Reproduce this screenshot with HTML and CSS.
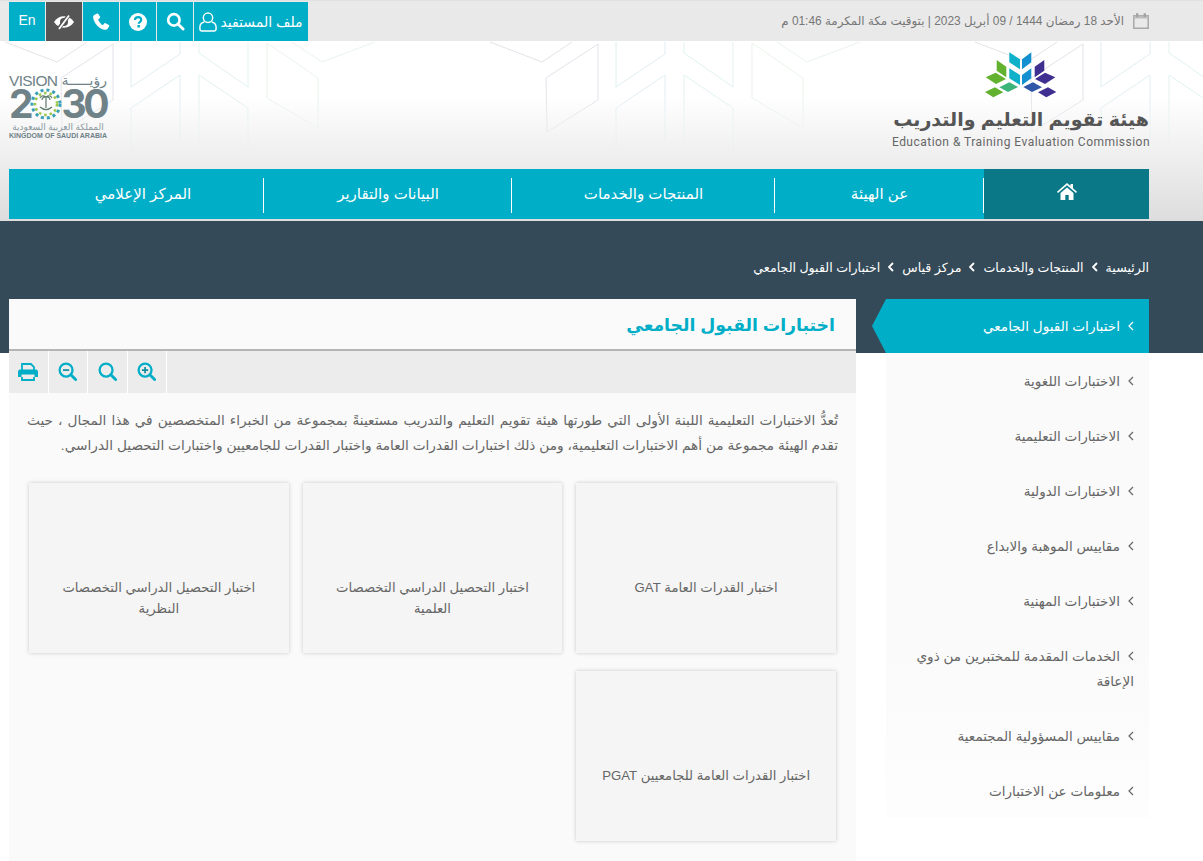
FILE: index.html
```html
<!DOCTYPE html>
<html lang="ar" dir="rtl">
  <head>
    <meta charset="UTF-8" />
    <meta name="viewport" content="width=device-width, initial-scale=1.0" />
    <title>اختبارات القبول الجامعي</title>
    <link rel="stylesheet" href="styles.css">
  </head>
  <body>
    <div class="topbar">
      <div class="date">
        <svg class="cal" viewBox="0 0 16 16" width="16" height="16">
          <path d="M.8 2.700h14.400v12.500H.8z" fill="none" stroke="#a9a9a9" stroke-width="1.500" />
          <path d="M.8 2.700h14.400v2.800H.8z" fill="#bcbcbc" />
          <path d="M3 .3h2.400v3.600H3zM10.600 .3H13v3.600h-2.400z" fill="#a3a3a3" />
        </svg>
        <span>الأحد 18 رمضان 1444 / 09 أبريل 2023 | بتوقيت مكة المكرمة 01:46 م</span>
      </div>
      <div class="tools">
        <a class="tool profile">
          <span>ملف المستفيد</span>
          <svg viewBox="0 0 20 22" width="18" height="20">
            <circle cx="10" cy="6.300" r="5.200" fill="none" stroke="#fff" stroke-width="1.600" />
            <path d="M6 11C2.500 11.500 1 13.500 1 17v1.500C1 20 2 21 3.500 21h13c1.500 0 2.500-1 2.500-2.500V17c0-3.500-1.500-5.500-5-6" fill="none" stroke="#fff" stroke-width="1.600" />
          </svg>
        </a>
        <a class="tool">
          <svg viewBox="0 0 20 20" width="19" height="19">
            <circle cx="8.300" cy="8.300" r="6" fill="none" stroke="#fff" stroke-width="2.800" />
            <path d="M12.800 12.800l5.200 5.200" stroke="#fff" stroke-width="3" stroke-linecap="round" />
          </svg>
        </a>
        <a class="tool">
          <svg viewBox="0 0 18 18" width="18" height="18">
            <circle cx="9" cy="9" r="9" fill="#fff" />
            <path d="M6 7c0-1.800 1.300-2.900 3.100-2.900S12.200 5.200 12.200 6.800c0 2.200-2.500 2.200-2.500 3.900" fill="none" stroke="#00aec7" stroke-width="2.200" />
            <path d="M8.400 12h2.500v2.500H8.400z" fill="#00aec7" />
          </svg>
        </a>
        <a class="tool">
          <svg viewBox="0 0 18 18" width="17" height="17">
            <path d="M4.300.600 1.300 2C.300 2.600 0 3.600.200 5c.800 5.800 6.200 11.700 11.800 12.700 1.700.300 2.900 0 3.500-1l1.600-2.600c.300-.500.200-1-.300-1.300l-3.500-2c-.500-.300-1-.200-1.300.200l-1.300 1.500c-.300.300-.600.400-1 .200C8.500 11.700 6.500 9.500 5.600 7.500c-.200-.400-.100-.700.200-1L7.200 5.300c.400-.300.500-.800.300-1.300L5.700 1C5.300.400 4.800.300 4.300.600z" fill="#fff" />
          </svg>
        </a>
        <a class="tool eye">
          <svg viewBox="0 0 22 16" width="22" height="16">
            <path d="M1 8c2.500-3.800 5.800-5.700 10-5.700S18.500 4.200 21 8c-2.500 3.800-5.800 5.700-10 5.700S3.500 11.800 1 8z" fill="#fff" />
            <circle cx="11" cy="8" r="4" fill="#555" />
            <path d="M5 15.500 16.500.500" stroke="#555" stroke-width="4" />
            <path d="M6 15 16 1.500" stroke="#fff" stroke-width="1.800" />
          </svg>
        </a>
        <a class="tool lang">En</a>
      </div>
    </div>

    <div class="head">
      <svg class="pattern" width="100%" height="128">
        <defs>
          <pattern id="tile" width="485" height="128" patternUnits="userSpaceOnUse">
            <g fill="none" stroke-width="1">
              <path d="M5 1 57 21 87 1M61 37 113 3V59L62 91Z" stroke="#e2e2e9" />
              <path d="M131 1V46L180 13V1M131 110V67L180 34V99" stroke="#e0eef2" />
              <path d="M199 1V12L248 46V1M199 100V34L248 67V110" stroke="#e1f1f1" />
              <path d="M267 2 318 37V87L267 57ZM292 1 322 21 375 1" stroke="#e9f3ea" />
            </g>
          </pattern>
        </defs>
        <rect width="100%" height="128" fill="url(#tile)" />
      </svg>

      <div class="brand-row">
        <div class="brand">
          <svg viewBox="986 52 72 46" width="72" height="46">
            <path d="M1010.300 52.300 1021 59.300V69.300L1010.300 62.300ZM1010.300 68.300 1021 75V85L1010.300 78.300Z" fill="#0fb1c9" />
            <path d="M1023 59.300 1032.300 52.300V62.300L1023 69.300ZM1023 75 1032.300 68.300V78.300L1023 85Z" fill="#1490d0" />
            <path d="M997.700 60 1007.300 66.700V77.300L997.700 70.700ZM986.700 77.300 996.700 72.700 1007 79 997 84ZM986 92 996 87.300 1004.300 92.300 994.300 97.300Z" fill="#62b22f" />
            <path d="M1000.300 87.300 1010.300 82.300 1019 87 1009 92Z" fill="#3cb47a" />
            <path d="M1024.300 87 1034 82.300 1043 87.300 1033 92Z" fill="#2f57a8" />
            <path d="M1035.700 66.700 1045.300 60V70.700L1035.700 77.300ZM1036 79 1046 72.700 1056.300 77.300 1046 84ZM1039 92.300 1049 87.300 1057.300 92 1047.300 97.300Z" fill="#3f2f90" />
          </svg>
          <div class="brand-ar">هيئة تقويم التعليم والتدريب</div>
          <div class="brand-en">Education &amp; Training Evaluation Commission</div>
        </div>

        <svg class="vision" viewBox="0 0 100 70" width="100" height="70">
          <text class="v-top" x="0" y="15" textLength="49">VISION</text>
          <text class="v-top-ar" x="98" y="14">رؤيـــــة</text>
          <text class="v-num" x="0" y="47">2</text>
          <text class="v-num" x="52.500" y="47" textLength="48">30</text>
          <circle cx="37" cy="33" r="14" fill="none" stroke="#3aa0b8" stroke-width="3" stroke-dasharray="3 3" />
          <circle cx="37" cy="33" r="11" fill="none" stroke="#9cc646" stroke-width="2.500" stroke-dasharray="2.500 3" />
          <path d="M37 26v11M37 26c-3-2-5-1-6 1M37 26c3-2 5-1 6 1M37 26c-2-.5-4 1-4 3M37 26c2-.5 4 1 4 3M31 36c4 3.500 8 3.500 12 0" fill="none" stroke="#5c7b6c" stroke-width="1.200" />
          <text class="v-ar" x="49" y="59">المملكة العربية السعودية</text>
          <text class="v-en" x="49" y="67" textLength="98">KINGDOM OF SAUDI ARABIA</text>
        </svg>
      </div>

      <nav class="nav">
        <a class="nav-item home">
          <svg viewBox="0 0 20 17" width="20" height="17">
            <path d="M10 0 13.500 3V1H16V5.200L20 8.700 19 10 10 2.300 1 10 0 8.700Z" fill="#fff" />
            <path d="M3.500 10 10 4.400 16.500 10V17H11.700V12H8.300V17H3.500Z" fill="#fff" />
          </svg>
        </a>
        <a class="nav-item about">عن الهيئة</a>
        <a class="nav-item products">المنتجات والخدمات</a>
        <a class="nav-item data">البيانات والتقارير</a>
        <a class="nav-item media">المركز الإعلامي</a>
      </nav>
    </div>

    <div class="band">
      <div class="crumbs">
        <a>الرئيسية</a>
        <svg class="crumb-sep" viewBox="0 0 6 10" width="6" height="10"><path d="M5 1 1 5l4 4" fill="none" stroke="#fff" stroke-width="1.800" /></svg>
        <a>المنتجات والخدمات</a>
        <svg class="crumb-sep" viewBox="0 0 6 10" width="6" height="10"><path d="M5 1 1 5l4 4" fill="none" stroke="#fff" stroke-width="1.800" /></svg>
        <a>مركز قياس</a>
        <svg class="crumb-sep" viewBox="0 0 6 10" width="6" height="10"><path d="M5 1 1 5l4 4" fill="none" stroke="#fff" stroke-width="1.800" /></svg>
        <a>اختبارات القبول الجامعي</a>
      </div>
    </div>

    <div class="content">
      <div class="side">
        <div class="active"><svg class="angle" viewBox="0 0 6 10"><path d="M5 1 1 5l4 4" /></svg>اختبارات القبول الجامعي</div>
        <ul>
          <li><svg class="angle" viewBox="0 0 6 10"><path d="M5 1 1 5l4 4" /></svg>الاختبارات اللغوية</li>
          <li><svg class="angle" viewBox="0 0 6 10"><path d="M5 1 1 5l4 4" /></svg>الاختبارات التعليمية</li>
          <li><svg class="angle" viewBox="0 0 6 10"><path d="M5 1 1 5l4 4" /></svg>الاختبارات الدولية</li>
          <li><svg class="angle" viewBox="0 0 6 10"><path d="M5 1 1 5l4 4" /></svg>مقاييس الموهبة والابداع</li>
          <li><svg class="angle" viewBox="0 0 6 10"><path d="M5 1 1 5l4 4" /></svg>الاختبارات المهنية</li>
          <li><svg class="angle" viewBox="0 0 6 10"><path d="M5 1 1 5l4 4" /></svg>الخدمات المقدمة للمختبرين من ذوي الإعاقة</li>
          <li><svg class="angle" viewBox="0 0 6 10"><path d="M5 1 1 5l4 4" /></svg>مقاييس المسؤولية المجتمعية</li>
          <li><svg class="angle" viewBox="0 0 6 10"><path d="M5 1 1 5l4 4" /></svg>معلومات عن الاختبارات</li>
        </ul>
      </div>

      <div class="main">
        <h1>اختبارات القبول الجامعي</h1>
        <div class="toolbar">
          <a>
            <svg viewBox="0 0 20 18" width="20" height="18">
              <path d="M4 7V1h9l3 3v3M4 14v3h12v-3" fill="none" stroke="#00aec7" stroke-width="1.800" />
              <path d="M2 6.500h16c1 0 2 1 2 2V14h-3.500v-2.500h-13V14H0V8.500c0-1 1-2 2-2z" fill="#00aec7" />
            </svg>
          </a>
          <a>
            <svg viewBox="0 0 20 20" width="19" height="19">
              <circle cx="8.500" cy="8.500" r="6.800" fill="none" stroke="#00aec7" stroke-width="2.400" />
              <path d="M13.500 13.500l5 5" stroke="#00aec7" stroke-width="3" stroke-linecap="round" />
              <path d="M5.200 8.500h6.600" stroke="#0a8fa3" stroke-width="1.800" />
            </svg>
          </a>
          <a>
            <svg viewBox="0 0 20 20" width="19" height="19">
              <circle cx="8.500" cy="8.500" r="6.800" fill="none" stroke="#00aec7" stroke-width="2.400" />
              <path d="M13.500 13.500l5 5" stroke="#00aec7" stroke-width="3" stroke-linecap="round" />
            </svg>
          </a>
          <a>
            <svg viewBox="0 0 20 20" width="19" height="19">
              <circle cx="8.500" cy="8.500" r="6.800" fill="none" stroke="#00aec7" stroke-width="2.400" />
              <path d="M13.500 13.500l5 5" stroke="#00aec7" stroke-width="3" stroke-linecap="round" />
              <path d="M5.200 8.500h6.600M8.500 5.200v6.600" stroke="#0a8fa3" stroke-width="1.800" />
            </svg>
          </a>
        </div>
        <p class="intro">تُعدُّ الاختبارات التعليمية اللبنة الأولى التي طورتها هيئة تقويم التعليم والتدريب مستعينةً بمجموعة من الخبراء المتخصصين في هذا المجال ، حيث تقدم الهيئة مجموعة من أهم الاختبارات التعليمية، ومن ذلك اختبارات القدرات العامة واختبار القدرات للجامعيين واختبارات التحصيل الدراسي.</p>
        <div class="cards">
          <a class="card">اختبار القدرات العامة GAT</a>
          <a class="card">اختبار التحصيل الدراسي التخصصات العلمية</a>
          <a class="card">اختبار التحصيل الدراسي التخصصات النظرية</a>
          <a class="card">اختبار القدرات العامة للجامعيين PGAT</a>
        </div>
      </div>
    </div>
  </body>
</html>
```

FILE: styles.css
```css
* {
  box-sizing: border-box;
}

body {
  margin: 0;
  background: #fff;
  color: #666;
  font-family: "Liberation Sans", "DejaVu Sans", sans-serif;
  font-size: 13px;
  overflow-x: hidden;
}

.topbar {
  display: flex;
  justify-content: space-between;
  align-items: center;
  height: 41px;
  padding: 1px 54px 0 9px;
  background: #e9e9e9;
  border-top: 1px solid #e0e0e0;
}

.date {
  display: flex;
  align-items: center;
  gap: 9px;
  font-size: 11.900px;
  color: #777;
  margin-top: -2px;
}

.tools {
  display: flex;
  height: 40px;
  gap: 1px;
}

.tool {
  display: flex;
  align-items: center;
  justify-content: center;
  width: 36px;
  background: #00aec7;
  color: #fff;
}

.profile {
  width: 114px;
  gap: 3px;
  font-size: 14px;
}

.eye {
  background: #555;
}

.lang {
  font-size: 14px;
  padding-bottom: 3px;
}

.head {
  position: relative;
  height: 180px;
  padding: 0 54px 0 9px;
  background: linear-gradient(#fff 0, #fff 55px, #ddd 100%);
}

.pattern {
  position: absolute;
  top: 0;
  left: 0;
  -webkit-mask-image: linear-gradient(#000 40%, transparent 100%);
  mask-image: linear-gradient(#000 40%, transparent 100%);
}

.brand-row {
  position: relative;
  display: flex;
  justify-content: space-between;
  height: 128px;
}

.brand {
  display: flex;
  flex-direction: column;
  align-items: center;
  width: 256px;
  padding-top: 11px;
}

.brand-ar {
  margin-top: 8px;
  font-size: 19px;
  font-weight: bold;
  line-height: 28px;
  color: #555;
  white-space: nowrap;
}

.brand-en {
  margin-top: 1px;
  font-family: "Roboto", sans-serif;
  font-size: 12px;
  line-height: 15px;
  letter-spacing: 0.48px;
  color: #666;
  white-space: nowrap;
}

.vision {
  direction: ltr;
  margin-top: 30px;
  fill: #6f8288;
}

.v-top {
  font-size: 15.500px;
}

.v-top-ar {
  direction: rtl;
  font-size: 14px;
}

.v-num {
  font-family: "Inter", sans-serif;
  font-size: 39px;
  font-weight: 700;
}

.v-ar {
  direction: rtl;
  font-size: 9px;
  text-anchor: middle;
  fill: #8b9a9f;
}

.v-en {
  font-size: 7px;
  font-weight: bold;
  text-anchor: middle;
}

.nav {
  position: relative;
  display: flex;
  height: 50px;
  background: #00aec7;
}

.nav-item {
  display: flex;
  align-items: center;
  justify-content: center;
  height: 50px;
  color: #fff;
  font-size: 15px;
  position: relative;
}

.nav-item + .nav-item::before {
  content: "";
  position: absolute;
  right: 0;
  top: 9px;
  height: 35px;
  border-right: 1px solid #fff;
}

.home {
  width: 165px;
  background: #0a7886;
  padding-bottom: 6px;
}

.about {
  width: 209px;
}

.products {
  width: 263px;
}

.data {
  width: 248px;
}

.media {
  width: 255px;
  padding-left: 13px;
}

.band {
  height: 132px;
  padding: 36px 54px 0 9px;
  background: #344a58;
}

.crumbs {
  display: flex;
  align-items: center;
  gap: 8px;
  height: 20px;
  color: #fff;
  font-size: 12.600px;
}

.content {
  display: flex;
  gap: 16px;
  align-items: flex-start;
  margin-top: -54px;
  padding: 0 54px 0 9px;
}

.side {
  flex: none;
  width: 277px;
  font-size: 13.600px;
  line-height: 25px;
}

.side .active {
  height: 54px;
  padding: 15px 15px 14px 44px;
  background: #00aec7;
  color: #fff;
  clip-path: polygon(0 50%, 14px 0, 100% 0, 100% 100%, 14px 100%);
}

.side ul {
  margin: 0 0 0 14px;
  padding: 0;
  list-style: none;
  background: linear-gradient(#fafafa 60%, #fdfdfd 100%);
}

.side li {
  padding: 16px 15px 14px 30px;
  color: #666;
}

.angle {
  width: 6px;
  height: 10px;
  margin-left: 8px;
  fill: none;
  stroke: #666;
  stroke-width: 1.200;
}

.active .angle {
  stroke: #fff;
}

.crumb-sep {
  flex: none;
}

.main {
  flex: none;
  width: 847px;
  height: 562px;
  background: #fafafa;
}

h1 {
  margin: 0;
  height: 52px;
  padding: 0 21px;
  border-bottom: 2px solid #b5b5b5;
  font-size: 17.300px;
  font-weight: bold;
  line-height: 52px;
  color: #00aec7;
}

.toolbar {
  direction: ltr;
  display: flex;
  height: 42px;
  background: #ececec;
}

.toolbar a {
  display: flex;
  align-items: center;
  justify-content: center;
  width: 39.500px;
  padding-bottom: 1px;
  border-right: 1px solid #fff;
}

.intro {
  margin: 0;
  padding: 15px 18px 0;
  font-size: 13.700px;
  line-height: 25px;
  color: #666;
  text-align: justify;
}

.cards {
  display: grid;
  grid-template-columns: repeat(3, 1fr);
  grid-auto-rows: 170px;
  gap: 18px 14px;
  margin-top: 25px;
  padding: 0 20px;
}

.card {
  padding: 94px 18px 0;
  background: #f5f5f5;
  box-shadow: 0 0 4px rgba(0, 0, 0, 0.2);
  font-size: 13.200px;
  line-height: 21px;
  text-align: center;
  color: #666;
}
```
